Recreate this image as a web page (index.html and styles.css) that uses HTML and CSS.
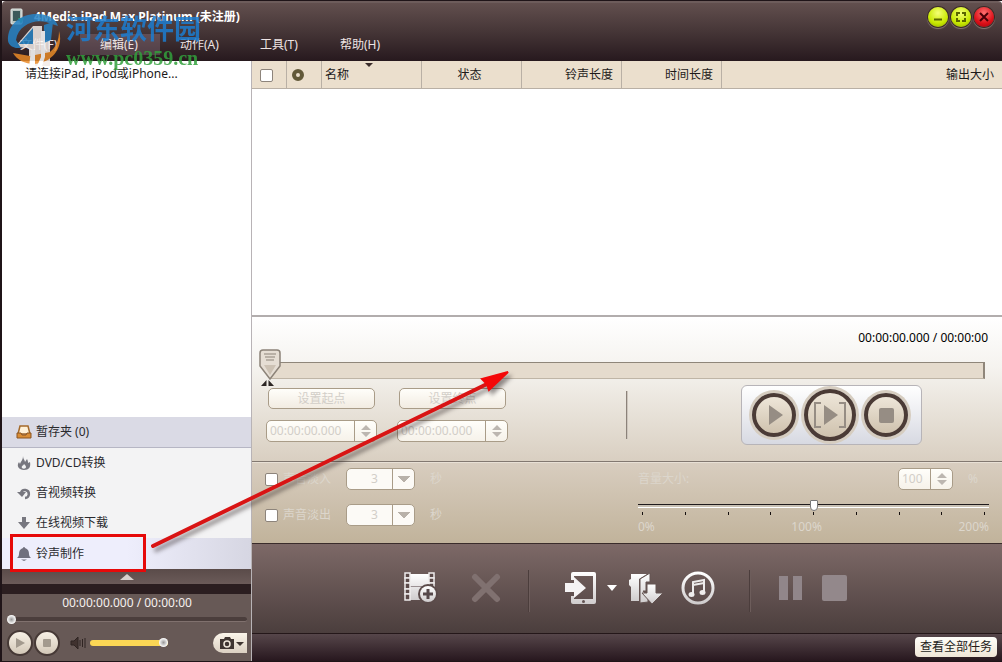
FILE: index.html
```html
<!DOCTYPE html>
<html lang="zh-CN">
<head>
<meta charset="utf-8">
<meta name="viewport" content="width=device-width, initial-scale=1">
<title>4Media iPad Max Platinum</title>
<link rel="stylesheet" href="styles.css">
</head>
<body>
<div class="window">
  <header class="titlebar">
    <div class="title-row">
      <svg class="app-icon" width="16" height="18" viewBox="0 0 16 18"><rect x="1" y="1" width="11" height="15" rx="1" fill="#b9c4c0" stroke="#e4ebe8"/><rect x="3" y="3" width="7" height="10" fill="#3c5a5a"/><path d="M8 10h6l-3 6z" fill="#2ea36b"/></svg>
      <h1 class="title">4Media iPad Max Platinum (未注册)</h1>
      <div class="window-buttons">
        <button class="orb" aria-label="最小化"><svg width="20" height="20" viewBox="0 0 20 20"><path d="M6 12.5h8" stroke="#5a6500" stroke-width="2"/></svg></button>
        <button class="orb" aria-label="最大化"><svg width="20" height="20" viewBox="0 0 20 20"><path d="M6 9V6h3M11 6h3v3M14 11v3h-3M9 14H6v-3" fill="none" stroke="#5a6500" stroke-width="2"/></svg></button>
        <button class="orb close" aria-label="关闭"><svg width="20" height="20" viewBox="0 0 20 20"><path d="M6 6l8 8M14 6l-8 8" stroke="#4a0008" stroke-width="2"/></svg></button>
      </div>
    </div>
    <nav class="menu">
      <button class="menu-item">文件(F)</button>
      <button class="menu-item active">编辑(E)</button>
      <button class="menu-item">动作(A)</button>
      <button class="menu-item">工具(T)</button>
      <button class="menu-item">帮助(H)</button>
    </nav>
    <div class="watermark">
      <svg class="wm-logo" width="58" height="58" viewBox="0 0 58 58">
        <path d="M24 55V37L10 36l18-21h9v16l8-3v27z" fill="#f3ece8"/>
        <path d="M3 30C2 12 18 2 33 3c10 0 18 5 20 12L41 11C28 8 13 15 11 29l5 8h-5c-4-1-7-3-8-7z" fill="#2683c5"/>
        <path d="M28 17L14 33h14zM39 14l9-3-2 18-7 3z" fill="#2683c5"/>
        <path d="M54 20c5 16-7 32-25 33-9 0-17-4-21-11l17 3 20-4c6-5 9-12 9-21z" fill="#e98a27"/>
        <path d="M26 38h4v19h-6zM36 20h4v26l-3 9h-5l4-9z" fill="#fff"/>
      </svg>
      <div class="wm-text"><span class="wm-name">河东软件园</span><span class="wm-url">www.pc0359.cn</span></div>
    </div>
  </header>

  <div class="body">
    <aside class="sidebar">
      <div class="device-tree">请连接iPad, iPod或iPhone...</div>
      <nav class="side-nav">
        <button class="side-item staging"><svg width="16" height="16" viewBox="0 0 16 16"><path d="M4 2h8l2 8H2z" fill="#fff1d8" stroke="#a56a2b" stroke-width="1.5"/><path d="M1 9h4l1 2h4l1-2h4v5H1z" fill="#d98d35" stroke="#8b5423"/></svg>暂存夹 (0)</button>
        <button class="side-item"><svg width="16" height="16" viewBox="0 0 16 16"><path d="M7 1c0 3 2 4 2 6l2-3c1 2 1 3 1 4l2-1c1 5-1 8-6 8s-8-4-5-8l1 2c1-3 3-4 3-8z" fill="#77777f"/><path d="M8 9c-1 2-3 2-2 4 1 1 4 1 4-1 0-1-1-2-2-3z" fill="#f2f2f3"/></svg>DVD/CD转换</button>
        <button class="side-item"><svg width="16" height="16" viewBox="0 0 16 16"><path d="M5 8a4 4 0 1 1 4 5" fill="none" stroke="#77777f" stroke-width="2.500"/><path d="M1 7h9l-4 5z" fill="#77777f"/></svg>音视频转换</button>
        <button class="side-item"><svg width="16" height="16" viewBox="0 0 16 16"><path d="M6 2h4v5h4l-6 7-6-7h4z" fill="#77777f"/></svg>在线视频下载</button>
        <button class="side-item selected"><svg width="16" height="16" viewBox="0 0 16 16"><path d="M8 1c1 0 1 1 1 1 3 1 4 3 4 6 0 2 1 3 2 4H1c1-1 2-2 2-4 0-3 1-5 4-6 0 0 0-1 1-1zM5 13.500h6L8 15z" fill="#70707e"/></svg>铃声制作</button>
      </nav>
      <button class="collapse" aria-label="折叠"><svg width="14" height="6" viewBox="0 0 14 6"><path d="M7 0l7 6H0z" fill="#d9d1ce"/></svg></button>
      <div class="strip"></div>
      <div class="mini-player">
        <div class="mini-time">00:00:00.000 / 00:00:00</div>
        <input class="seek" type="range" min="0" max="100" value="0" aria-label="进度">
        <div class="mini-controls">
          <button class="mini-btn" aria-label="播放"><svg width="12" height="12" viewBox="0 0 12 12"><path d="M2 1l9 5-9 5z" fill="#a39a8e"/></svg></button>
          <button class="mini-btn" aria-label="停止"><svg width="12" height="12" viewBox="0 0 12 12"><rect x="2" y="2" width="8" height="8" rx="1" fill="#a39a8e"/></svg></button>
          <svg class="speaker" width="16" height="14" viewBox="0 0 16 14"><path d="M1 5h3l4-4v12L4 9H1zM10 4v6M12.500 3v8M15 2v10" fill="#40322f" stroke="#2f2422"/></svg>
          <input class="volume" type="range" min="0" max="100" value="100" aria-label="音量">
          <button class="camera" aria-label="截图"><svg width="26" height="14" viewBox="0 0 26 14"><path d="M1 3h4l1-2h5l1 2h3v10H1z" fill="#3f3531"/><circle cx="8" cy="8" r="3" fill="none" stroke="#eee6da" stroke-width="1.500"/><path d="M17 6h8l-4 4z" fill="#3f3531"/></svg></button>
        </div>
      </div>
    </aside>

    <main class="main">
      <div class="list">
        <table class="tasks">
          <colgroup><col class="c-check"><col class="c-disc"><col class="c-std"><col class="c-std"><col class="c-std"><col class="c-std"><col></colgroup>
          <thead><tr>
            <th><input class="check" type="checkbox" aria-label="全选"></th>
            <th><svg class="disc" width="14" height="14" viewBox="0 0 14 14"><circle cx="7" cy="7" r="4" fill="none" stroke="#625939" stroke-width="4"/></svg></th>
            <th class="left">名称<svg class="sort" width="8" height="4" viewBox="0 0 8 4"><path d="M0 0h8L4 4z" fill="#3a2c2a"/></svg></th>
            <th class="center">状态</th><th class="right">铃声长度</th><th class="right">时间长度</th><th class="right">输出大小</th>
          </tr></thead>
        </table>
      </div>

      <section class="preview">
        <div class="preview-time">00:00:00.000 / 00:00:00</div>
        <div class="track">
          <svg class="marker" width="22" height="38" viewBox="0 0 22 38"><path d="M4 1h14q3 0 3 3v13L11 30 1 17V4q0-3 3-3z" fill="#e6ded4" stroke="#8c8378" stroke-width="1.500"/><path d="M5 5h12M6 8h10M7 11h8" stroke="#8c8378"/><path d="M5 16h12l-6 10z" fill="#cdc2b4"/><path d="M7.500 31v6H2zM9.500 31v6H15z" fill="#2c2624"/></svg>
        </div>
        <div class="preview-row">
          <div class="points">
            <div class="point"><button class="point-btn" disabled>设置起点</button>
              <div class="spin"><input class="spin-input time" value="00:00:00.000" aria-label="起点" disabled><button class="spin-btn" aria-label="调整起点" disabled><svg width="12" height="14" viewBox="0 0 12 14"><path d="M6 1l5 5H1zM1 8h10l-5 5z" fill="#bcb6b0"/></svg></button></div></div>
            <div class="point"><button class="point-btn" disabled>设置终点</button>
              <div class="spin"><input class="spin-input time" value="00:00:00.000" aria-label="终点" disabled><button class="spin-btn" aria-label="调整终点" disabled><svg width="12" height="14" viewBox="0 0 12 14"><path d="M6 1l5 5H1zM1 8h10l-5 5z" fill="#bcb6b0"/></svg></button></div></div>
          </div>
          <div class="divider"></div>
          <div class="transport">
            <button class="round" aria-label="播放"><svg width="36" height="36" viewBox="0 0 36 36"><path d="M13 8l14 10-14 10z" fill="#968d84"/></svg></button>
            <button class="round large" aria-label="播放选区"><svg width="44" height="44" viewBox="0 0 44 44"><path d="M16 12l14 10-14 10z" fill="#968d84"/><path d="M13 10H7v24h6M31 10h6v24h-6" fill="none" stroke="#968d84" stroke-width="2"/></svg></button>
            <button class="round" aria-label="停止"><svg width="36" height="36" viewBox="0 0 36 36"><rect x="11" y="11" width="15" height="15" rx="2" fill="#968d84"/></svg></button>
          </div>
        </div>
      </section>

      <section class="effects">
        <div class="fades">
          <div class="fade"><label class="fade-label"><input class="check" type="checkbox">声音淡入</label><select class="combo" aria-label="淡入秒数" disabled><option>3</option></select><span>秒</span></div>
          <div class="fade"><label class="fade-label"><input class="check" type="checkbox">声音淡出</label><select class="combo" aria-label="淡出秒数" disabled><option>3</option></select><span>秒</span></div>
        </div>
        <div class="gain">
          <div class="gain-row"><label for="gain">音量大小:</label>
            <div class="spin short"><input class="spin-input" id="gain" value="100" disabled><button class="spin-btn" aria-label="调整音量" disabled><svg width="12" height="14" viewBox="0 0 12 14"><path d="M6 1l5 5H1zM1 8h10l-5 5z" fill="#bcb6b0"/></svg></button></div><span class="percent">%</span></div>
          <input class="gain-slider" type="range" min="0" max="200" value="100" aria-label="音量大小">
          <div class="ticks"><i></i><i></i><i></i><i></i><i></i><i></i><i></i><i></i><i></i></div>
          <div class="scale"><span>0%</span><span>100%</span><span>200%</span></div>
        </div>
      </section>

      <div class="toolbar">
        <svg width="0" height="0" class="defs"><defs><linearGradient id="sil" x1="0" y1="0" x2="0" y2="1"><stop offset="0" stop-color="#fff"/><stop offset="1" stop-color="#cfcccd"/></linearGradient></defs></svg>
        <button class="tool film" aria-label="添加文件"><svg width="34" height="34" viewBox="0 0 34 34"><rect x="6" y="3" width="20" height="26" fill="url(#sil)"/><path d="M6 15.500h20" stroke="#9a9092"/><g fill="#5b4a49" stroke="#eeecec" stroke-width="1.500"><rect x="1" y="2" width="5" height="5"/><rect x="1" y="7" width="5" height="5"/><rect x="1" y="12" width="5" height="6"/><rect x="1" y="18" width="5" height="5"/><rect x="1" y="23" width="5" height="6"/><rect x="25" y="2" width="5" height="5"/><rect x="25" y="7" width="5" height="5"/><rect x="25" y="12" width="5" height="4"/></g><circle cx="24" cy="23" r="10" fill="#5b4b4a"/><circle cx="24" cy="23" r="8" fill="url(#sil)"/><path d="M24 18v10M19 23h10" stroke="#55484a" stroke-width="3"/></svg></button>
        <button class="tool" aria-label="删除" disabled><svg width="30" height="30" viewBox="0 0 30 30"><path d="M4 4l22 22M26 4L4 26" stroke="#807170" stroke-width="6" stroke-linecap="round"/></svg></button>
        <span class="tool-sep"></span>
        <button class="tool" aria-label="传输到设备"><svg width="34" height="34" viewBox="0 0 34 34"><path d="M9 1h21q2 0 2 2v28q0 2-2 2H9q-2 0-2-2v-6h3v3h19V5H10v4H7V3q0-2 2-2z" fill="url(#sil)"/><circle cx="19.500" cy="30.500" r="1.500" fill="#625352"/><path d="M1 12h9V6l12 11-12 10v-6H1z" fill="#f5f3f4"/></svg></button>
        <button class="tool caret" aria-label="更多"><svg width="10" height="6" viewBox="0 0 10 6"><path d="M0 0h10L5 6z" fill="#fff"/></svg></button>
        <button class="tool export" aria-label="导出"><svg width="36" height="34" viewBox="0 0 36 34"><path d="M3 3h16l-8 5v22H3V16l-2-2V9l2-1z" fill="url(#sil)"/><path d="M12 8l10-6v9h-4v9h-3l5 6v5l-8 1z" fill="url(#sil)" stroke="#655553"/><path d="M19 13h9v9h7L24 33 14 22h5z" fill="url(#sil)" stroke="#655553"/></svg></button>
        <button class="tool music" aria-label="导出到iTunes"><svg width="34" height="34" viewBox="0 0 34 34"><circle cx="17" cy="17" r="15" fill="none" stroke="url(#sil)" stroke-width="3"/><path d="M12 23V11l11-2v12M12 14l11-2" fill="none" stroke="#eeecec" stroke-width="2"/><ellipse cx="10.500" cy="23.500" rx="3" ry="2.500" fill="#eeecec"/><ellipse cx="21.500" cy="21.500" rx="3" ry="2.500" fill="#eeecec"/></svg></button>
        <span class="tool-sep last"></span>
        <button class="tool" aria-label="暂停" disabled><svg width="24" height="26" viewBox="0 0 24 26"><path d="M0 1h9v24H0zM14 1h9v24h-9z" fill="#91868a"/></svg></button>
        <button class="tool stop" aria-label="停止任务" disabled><svg width="26" height="26" viewBox="0 0 26 26"><rect width="25" height="26" rx="2" fill="#93888b"/></svg></button>
      </div>

      <footer class="status"><button class="view-all">查看全部任务</button></footer>
    </main>
  </div>

  <div class="highlight"></div>
  <svg class="arrow" width="370" height="190" viewBox="0 0 370 190"><path d="M7 178L341 16" stroke="#d91414" stroke-width="4" stroke-linecap="round"/><path d="M362 4l-19 18-2-6-5-5z" fill="#f40808" stroke="#f40808" stroke-width="2"/></svg>
</div>
</body>
</html>
```
FILE: styles.css
```css
* { box-sizing: border-box; }
body {
  margin: 0;
  font: 12px/16px "Noto Sans", "Noto Sans CJK SC", sans-serif;
  color: #1d1a1a;
}
button, input, select { font: inherit; color: inherit; margin: 0; }
button { border: 0; padding: 0; background: none; }
svg { display: block; flex: none; }

.window {
  position: relative;
  display: flex;
  flex-direction: column;
  min-height: 100vh;
  border: 1px solid #1f1418;
  border-width: 1px 0 1px 2px;
  background: #fff;
}

/* Title bar and menu */
.titlebar {
  position: relative;
  height: 60px;
  border-top: 2px solid #6d5c5b;
  border-radius: 4px 4px 0 0;
  background: linear-gradient(#624f4e, #483839 45%, #27191e);
  color: #fff;
}
.title-row { display: flex; align-items: center; height: 28px; padding: 0 8px; gap: 8px; }
.title { flex: 1; margin: 0; font-size: 12px; line-height: 16px; font-weight: 700; }
.window-buttons { display: flex; gap: 3px; }
.orb {
  width: 20px;
  height: 20px;
  border-radius: 50%;
  background: radial-gradient(circle at 50% 30%, #f4ff75, #c8e800 60%, #8fa500);
  box-shadow: 0 0 0 1px #3a2a25, 0 1px 1px 1px #8a7a76;
}
.orb.close { background: radial-gradient(circle at 50% 30%, #ff7070, #dc1018 60%, #99000c); }
.menu { display: flex; padding-top: 3px; margin-left: -2px; }
.menu-item { width: 80px; height: 21px; padding-left: 20px; text-align: left; color: #eee4e4; }
.menu-item.active { background: rgba(190, 160, 180, .25); }

.watermark { position: absolute; left: 3px; top: 8px; display: flex; gap: 3px; opacity: .85; pointer-events: none; z-index: 2; }
.wm-text { display: flex; flex-direction: column; gap: 4px; padding-top: 4px; white-space: nowrap; }
.wm-name { font-size: 27px; line-height: 28px; font-weight: 700; color: #1c7dd0; }
.wm-url { font: 700 20px/22px "Liberation Serif", serif; color: #32a03c; }

.body { flex: 1; display: flex; }

/* Sidebar */
.sidebar { width: 250px; display: flex; flex-direction: column; border-right: 1px solid #b8b3b6; }
.device-tree { flex: 1; padding: 5px 23px; }
.side-nav { display: flex; flex-direction: column; background: #f3f3f4; }
.side-item { display: flex; align-items: center; gap: 4px; height: 30px; padding: 0 14px; text-align: left; color: #2a2a2e; }
.staging { height: 31px; background: #dadae5; border-bottom: 1px solid #b6b6c4; }
.selected { height: 31px; background: linear-gradient(90deg, #eeeefc 50%, #d6d6e2); }
.collapse {
  display: flex;
  justify-content: center;
  align-items: center;
  height: 15px;
  background: linear-gradient(#5a4b49, #6b5b59);
}
.strip { height: 10px; background: #2b1e20; }
.mini-player { height: 67px; padding: 0 4px 0 5px; background: #675956; color: #f5f0ee; }
.mini-time { text-align: center; line-height: 18px; }

input[type=range] { appearance: none; background: none; display: block; }
.seek { width: 100%; height: 14px; }
.seek::-webkit-slider-runnable-track { height: 5px; border-radius: 3px; background: #4b3e3c; border-bottom: 1px solid #80716e; }
.seek::-webkit-slider-thumb { appearance: none; width: 9px; height: 9px; margin-top: -2px; border-radius: 50%; background: radial-gradient(#999, #fff 70%); }
.mini-controls { display: flex; align-items: center; height: 34px; }
.mini-btn {
  display: grid;
  place-items: center;
  width: 26px;
  height: 26px;
  margin-right: 1px;
  border: 2px solid #463936;
  border-radius: 50%;
  background: linear-gradient(#f7f0e5, #d3c8b8);
}
.speaker { margin-left: 9px; }
.volume { flex: 1; min-width: 40px; height: 14px; margin-left: 4px; }
.volume::-webkit-slider-runnable-track { height: 6px; border-radius: 3px; background: #fbd755; }
.volume::-webkit-slider-thumb { appearance: none; width: 9px; height: 9px; margin-top: -2px; border-radius: 50%; background: radial-gradient(#999, #fff 70%); }
.camera { display: grid; place-items: center; width: 34px; height: 20px; margin-left: 45px; padding-left: 4px; border-radius: 10px 0 0 10px; background: linear-gradient(#fbf5ea, #dbd0c2); }

/* Task list */
.main { flex: 1; min-width: 0; display: flex; flex-direction: column; }
.list { flex: 1; min-height: 100px; border-bottom: 2px solid #b2adad; background: #fff; }
.tasks { width: 100%; table-layout: fixed; border-collapse: separate; border-spacing: 0; }
.c-check, .c-disc { width: 35px; }
.c-std { width: 100px; }
.tasks th {
  position: relative;
  height: 28px;
  padding: 0;
  border-right: 1px solid #b9b0a5;
  border-bottom: 1px solid #b9b0a5;
  background: #ebdfcd;
  font-weight: 400;
}
.tasks th:last-child { border-right: 0; }
.tasks .left { text-align: left; padding-left: 3px; }
.tasks .center { text-align: center; padding-right: 4px; }
.tasks .right { text-align: right; padding-right: 8px; }
.sort { position: absolute; left: 43px; top: 2px; }
.check {
  appearance: none;
  width: 13px;
  height: 13px;
  border: 1px solid #8d847b;
  border-radius: 2px;
  background: #fff;
  vertical-align: middle;
}
.tasks .check { margin-right: 6px; }
.disc { margin-left: 4px; }

/* Preview */
.preview { padding: 12px 14px 16px; border-bottom: 1px solid #827870; background: linear-gradient(#fff, #f5f3ef 35%, #d9cfc1); }
.preview-time { text-align: right; line-height: 18px; color: #000; }
.track {
  position: relative;
  height: 17px;
  margin: 15px 3px 0;
  border: 1px solid #bfb5a6;
  border-top: 1px solid #8f867a;
  border-right: 2px solid #8f867a;
  background: #e5dbcd;
}
.marker { position: absolute; left: -11px; top: -14px; }
.preview-row { display: flex; align-items: center; padding-top: 6px; }
.points { display: flex; gap: 20px; }
.point { display: flex; flex-direction: column; align-items: center; gap: 11px; }
.point-btn {
  width: 107px;
  height: 21px;
  border: 1px solid #a99c88;
  border-radius: 5px;
  background: linear-gradient(#fffefa, #f2ece2);
  color: #d2cec8;
}
.spin, .combo { border: 1px solid #a99c88; border-radius: 5px; }
.spin { display: flex; width: 111px; height: 22px; background: linear-gradient(#fffefa, #f6f2ea); color: #d2cec8; }
.spin-input { flex: 1; min-width: 0; padding: 0 3px; border: 0; background: none; outline: 0; color: #d2cec8; }
.spin-btn { display: grid; place-items: center; width: 22px; border-left: 1px solid #a99c88; }
.divider { width: 2px; height: 48px; margin-left: 118px; background: linear-gradient(90deg, #6b6058, #eee8df); }
.transport {
  display: flex;
  align-items: center;
  justify-content: center;
  gap: 8px;
  width: 181px;
  height: 60px;
  margin-left: auto;
  margin-right: 66px;
  padding-right: 4px;
  border: 1px solid #b7b4b8;
  border-radius: 6px;
  background: linear-gradient(#fff, #d7d9e2);
}
.round {
  display: grid;
  place-items: center;
  width: 44px;
  height: 44px;
  border: 4px solid #4b3b36;
  border-radius: 50%;
  background: linear-gradient(#eee6d9, #cfc2ae);
  box-shadow: 0 0 0 3px #d6cdc0;
}
.round.large { width: 52px; height: 52px; }

/* Fade and volume settings */
.effects {
  display: flex;
  justify-content: space-between;
  padding: 5px 13px 8px;
  border-top: 1px solid #e8e0d5;
  border-bottom: 1px solid #3a2c2b;
  background: linear-gradient(#d8cdbf, #c1b39b);
  color: #dcd6cc;
}
.fades { display: flex; flex-direction: column; gap: 14px; }
.fade { display: flex; align-items: center; height: 22px; gap: 15px; }
.fade-label { display: flex; align-items: center; gap: 5px; width: 66px; white-space: nowrap; }
.combo {
  appearance: none;
  width: 69px;
  height: 22px;
  padding: 0 22px 0 24px;
  background:
    linear-gradient(#a99c88, #a99c88) 45px 0 / 1px 100% no-repeat,
    linear-gradient(to bottom left, #b8b1a9 50%, transparent 51%) 51px 7px / 6px 6px no-repeat,
    linear-gradient(to bottom right, #b8b1a9 50%, transparent 51%) 57px 7px / 6px 6px no-repeat,
    #fcfaf6;
  color: #d2cec8;
  opacity: 1;
}
.gain { width: 351px; }
.gain-row { display: flex; align-items: center; height: 22px; }
.spin.short { width: 55px; margin-left: auto; }
.percent { width: 36px; padding-left: 15px; }
.gain-slider { width: 100%; height: 16px; margin-top: 8px; }
.gain-slider::-webkit-slider-runnable-track { height: 4px; border-top: 1px solid #1f1a1c; border-bottom: 1px solid #fff; background: #c8c0b3; }
.gain-slider::-webkit-slider-thumb { appearance: none; width: 8px; height: 11px; margin-top: -5px; border: 1px solid #777; border-radius: 1px 1px 4px 4px; background: #fff; }
.ticks { display: flex; justify-content: space-between; margin-top: -2px; padding: 0 4px; }
.ticks i { width: 1px; height: 3px; background: #15100f; }
.scale { display: flex; justify-content: space-between; padding-top: 4px; }

/* Toolbar */
.toolbar {
  display: flex;
  align-items: center;
  height: 89px;
  padding: 0 0 2px 152px;
  background: linear-gradient(#7d6967, #4b3e3d);
}
.defs { position: absolute; }
.film { margin-right: 33px; }
.tool-sep { width: 2px; height: 42px; margin: 6px 34px 0 27px; background: linear-gradient(90deg, #3a2d2c, #7e6d6b); }
.caret { margin-left: 9px; }
.export { margin-left: 11px; }
.music { margin-left: 17px; }
.tool-sep.last { margin: 6px 28px 0 34px; }
.stop { margin-left: 19px; }
.status {
  display: flex;
  align-items: center;
  justify-content: flex-end;
  height: 28px;
  padding: 0 5px 2px 0;
  border-top: 1px solid #241719;
  background: linear-gradient(#56464a, #27171e);
}
.view-all { height: 20px; padding: 0 5px; border-radius: 4px; background: linear-gradient(#fffefa, #efe5d6); color: #241c1a; }

/* Annotations */
.highlight { position: absolute; left: 8px; top: 533px; width: 136px; height: 38px; border: 3px solid #e60909; pointer-events: none; }
.arrow { position: absolute; left: 144px; top: 367px; pointer-events: none; filter: drop-shadow(3px 4px 2px rgba(40, 30, 30, .5)); }
```
